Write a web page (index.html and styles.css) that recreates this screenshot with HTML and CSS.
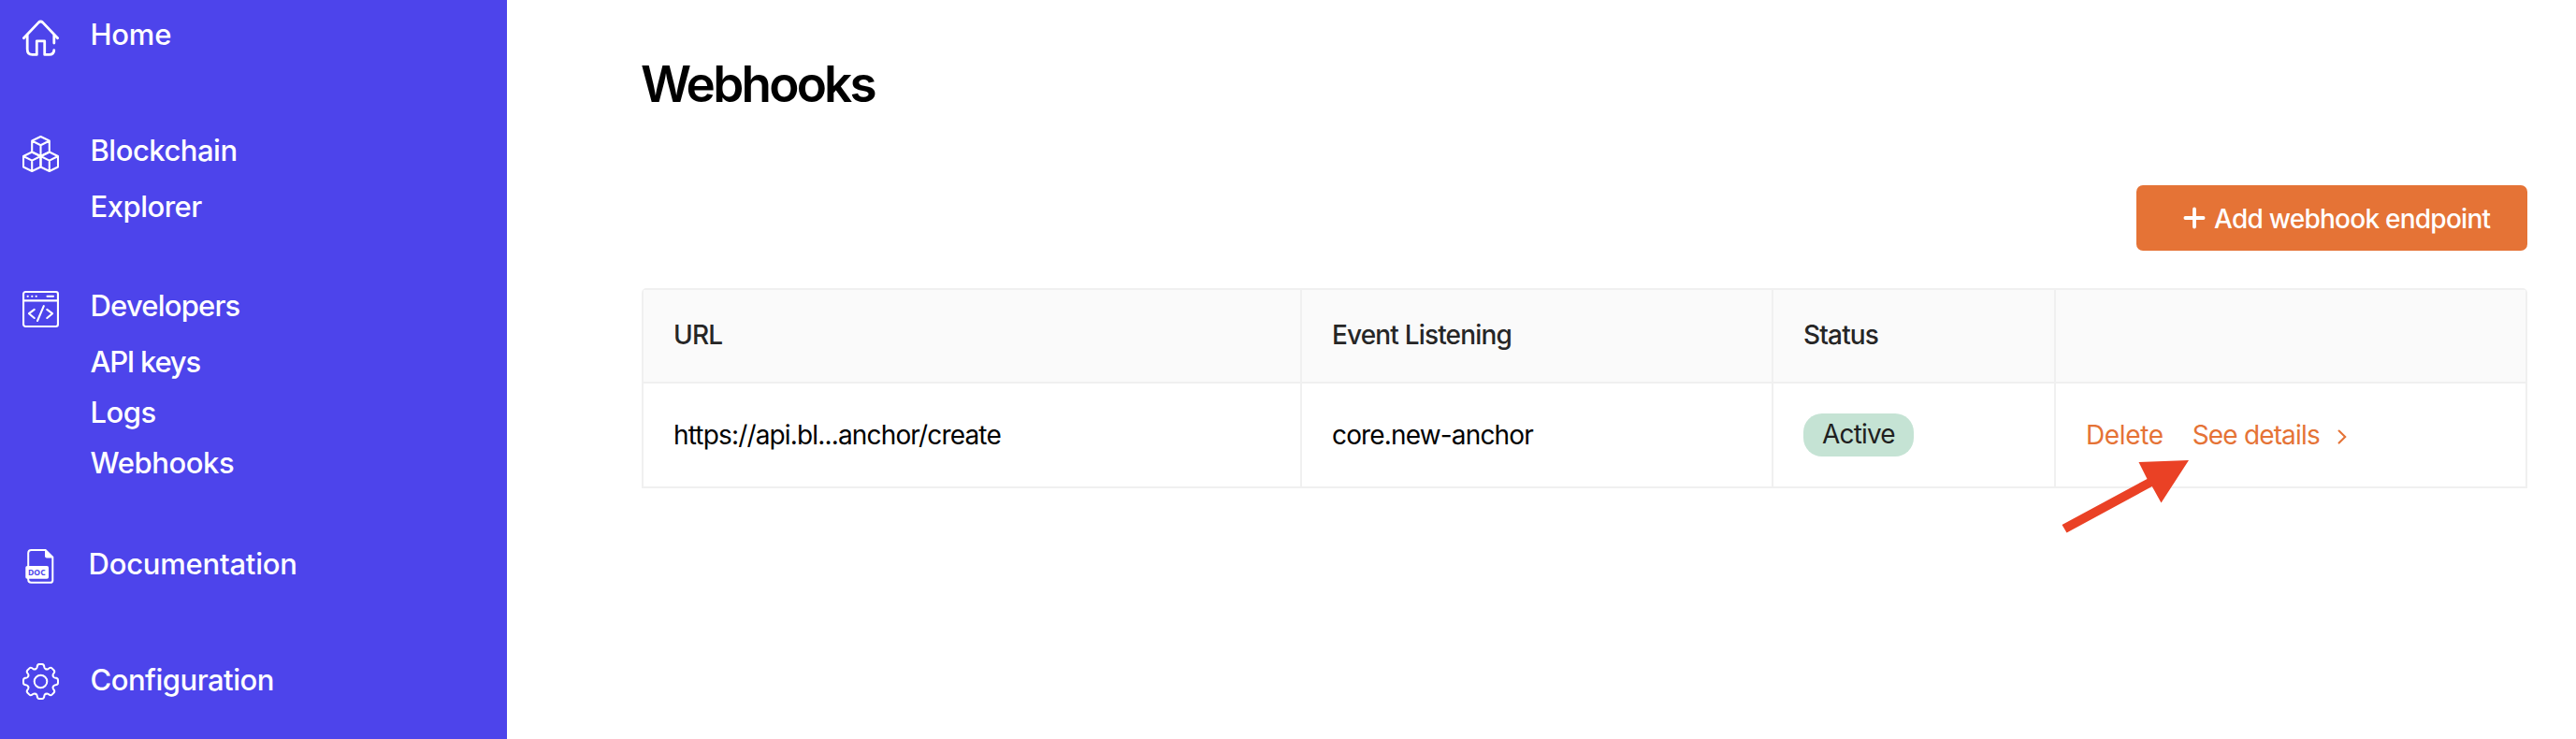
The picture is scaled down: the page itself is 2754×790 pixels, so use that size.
FILE: index.html
```
<!DOCTYPE html>
<html lang="en">
<head>
<meta charset="utf-8">
<title>Webhooks</title>
<link rel="stylesheet" href="styles.css">
</head>
<body>
<div class="app">
  <nav class="sidebar">
    <div class="group">
      <svg class="icon" viewBox="0 0 39 39" fill="none" stroke="#fff" stroke-width="2.8" stroke-linecap="round" stroke-linejoin="round">
        <path d="M1.4 19.7 17.2 3.1Q19.5 1 21.8 3.1L37.6 19.7"/>
        <path d="M5.2 17V31.5Q5.2 37.4 10.5 37.4H15.3V22.8H23.7V37.4H28.5Q33.6 37.4 33.8 32.6"/>
        <path d="M33.8 17V25"/>
      </svg>
      <div class="links"><a>Home</a></div>
    </div>
    <div class="group">
      <svg class="icon" viewBox="0 0 39 39" fill="none" stroke="#fff" stroke-width="2.1" stroke-linejoin="round">
        <path d="M19.5 1 28.8 5.5V17.5L19.5 22 10.2 17.5V5.5ZM10.2 5.5 19.5 10.2 28.8 5.5M19.5 10.2V22"/>
        <path d="M10.2 17.5 19.5 22V33.5L10.2 38 1 33.5V22ZM1 22 10.2 26.6 19.5 22M10.2 26.6V38"/>
        <path d="M28.8 17.5 38 22V33.5L28.8 38 19.5 33.5V22ZM19.5 22 28.8 26.6 38 22M28.8 26.6V38"/>
      </svg>
      <div class="links"><a class="snug">Blockchain</a><a class="first-sub snug">Explorer</a></div>
    </div>
    <div class="group developers">
      <svg class="icon" viewBox="0 0 39 39" fill="none" stroke="#fff" stroke-width="2.1" stroke-linecap="round" stroke-linejoin="round">
        <rect x="1.05" y="1.05" width="36.9" height="36.9" rx="2.2"/>
        <path d="M1 10.4H38M26.5 5.7H33M12.7 19.8 7 24.2 12.7 29M26.3 19.8 32 24.2 26.3 29M22.8 16.2 16 32"/>
        <path d="M5.6 5.7H5.8M10.2 5.7H10.4M14.6 5.7H14.8"/>
      </svg>
      <div class="links"><a class="tight">Developers</a><a class="first-sub tighter">API keys</a><a class="sub snug">Logs</a><a class="sub webhooks">Webhooks</a></div>
    </div>
    <div class="group documentation">
      <svg class="icon icon-doc" viewBox="0 0 39 39" fill="none">
        <path d="M6.2 19V5.3Q6.2 2 9.5 2H24.6L32.3 9.6V34.4Q32.3 36.8 29.6 36.8H9.5Q6.2 36.8 6.2 33.4V31" stroke="#fff" stroke-width="2"/>
        <path d="M24 1.4 33 10.6H26Q24 10.6 24 8.6Z" fill="#fff"/>
        <rect x="3.3" y="19" width="24.7" height="13.7" rx="1.8" fill="#fff"/>
        <text class="doc-text" x="6" y="29.2" textLength="18.6" lengthAdjust="spacingAndGlyphs">DOC</text>
      </svg>
      <div class="links"><a>Documentation</a></div>
    </div>
    <div class="group">
      <svg class="icon icon-gear" viewBox="-19.5 -19.5 39 39" fill="none" stroke="#fff" stroke-width="2" stroke-linecap="round">
        <defs><path id="tooth" d="M-5.5-13.3Q-4-13.9-3.9-15Q-3.7-18.5-1.5-18.5H1.5Q3.7-18.5 3.9-15Q4-13.9 5.5-13.3"/></defs>
        <use href="#tooth"/><use href="#tooth" transform="rotate(45)"/><use href="#tooth" transform="rotate(90)"/><use href="#tooth" transform="rotate(135)"/><use href="#tooth" transform="rotate(180)"/><use href="#tooth" transform="rotate(225)"/><use href="#tooth" transform="rotate(270)"/><use href="#tooth" transform="rotate(315)"/>
        <circle r="6.8"/>
      </svg>
      <div class="links"><a class="snug">Configuration</a></div>
    </div>
  </nav>
  <main class="main">
    <h1 class="title">Webhooks</h1>
    <div class="toolbar">
      <button class="add">
        <svg class="plus" viewBox="0 0 24 24" fill="none" stroke="#fff" stroke-width="3.8" stroke-linecap="round"><path d="M12 2.4V21.6M2.4 12H21.6"/></svg>
        <span class="add-label">Add webhook endpoint</span>
      </button>
    </div>
    <div class="table">
      <div class="row head">
        <div class="cell">URL</div><div class="cell">Event Listening</div><div class="cell">Status</div><div class="cell"></div>
      </div>
      <div class="row body">
        <div class="cell">https://api.bl...anchor/create</div>
        <div class="cell">core.new-anchor</div>
        <div class="cell"><span class="badge">Active</span></div>
        <div class="cell actions">
          <a class="delete">Delete</a><a class="details">See details</a>
          <svg class="chevron" viewBox="0 0 10 16" fill="none" stroke="#e57336" stroke-width="2.1" stroke-linecap="round"><path d="M1.6 1.6 8.2 8 1.6 14.6"/></svg>
        </div>
      </div>
      <svg class="arrow" viewBox="0 0 140 80"><path d="M139 1 85.5 3 94.5 21 3.5 70 8.5 78.5 99.8 29 109.5 46.5Z" fill="#ea4125"/></svg>
    </div>
  </main>
</div>
</body>
</html>
```
FILE: styles.css
```
body {
  margin: 0;
  background: #fff;
  font-family: Inter, "Liberation Sans", sans-serif;
}
.app {
  display: flex;
  height: 790px;
  overflow: hidden;
}
.sidebar {
  box-sizing: border-box;
  flex: none;
  width: 542px;
  padding: 17px 0 0 24px;
  background: #4d44eb;
}
.group {
  display: flex;
  align-items: flex-start;
  gap: 33.5px;
  margin-bottom: 84px;
}
.group:nth-child(2) { margin-bottom: 66px; }
.developers { margin-bottom: 68px; }
.documentation { gap: 31.5px; }
.icon {
  flex: none;
  width: 39px;
  height: 39px;
  margin: 4px 0 -3px;
}
.icon-doc { margin-top: 3px; }
.icon-gear { margin-top: 2px; }
.doc-text {
  font: 700 9.5px "Open Sans", sans-serif;
  fill: #4d44eb;
}
.links {
  display: flex;
  flex-direction: column;
  color: #fff;
  font-size: 31px;
  font-weight: 450;
  line-height: 40px;
  letter-spacing: -0.22px;
}
.first-sub { margin-top: 20px; }
.sub { margin-top: 14px; }
.snug { letter-spacing: -0.5px; }
.tight { letter-spacing: -0.8px; }
.tighter { letter-spacing: -1.25px; }
.webhooks { letter-spacing: -0.4px; }
.main {
  flex: none;
  width: 2016px;
  padding: 60px 0 0 144px;
}
.title {
  margin: 0 0 0 -1px;
  font-size: 53px;
  font-weight: 600;
  line-height: 60px;
  letter-spacing: -2.78px;
}
.toolbar {
  display: flex;
  justify-content: flex-end;
  margin: 78px 0 40px;
}
.add {
  display: flex;
  align-items: center;
  box-sizing: border-box;
  width: 418px;
  height: 70px;
  padding: 0 0 0 50px;
  border: 0;
  border-radius: 7px;
  background: #e57336;
  color: #fff;
  font: 500 28px/40px Inter, sans-serif;
  letter-spacing: -0.75px;
}
.add-label { padding-top: 2px; }
.plus {
  width: 24px;
  height: 24px;
  margin-right: 9px;
}
.table {
  position: relative;
  box-sizing: border-box;
  width: 2016px;
  border: 2px solid #f0f0f0;
  border-radius: 5px 5px 0 0;
  color: #000;
  font-size: 28px;
  letter-spacing: -0.84px;
}
.row {
  display: grid;
  grid-template-columns: 704px 504px 302px 502px;
}
.cell {
  display: flex;
  align-items: center;
  box-sizing: border-box;
  padding-left: 32px;
  border-right: 2px solid #f0f0f0;
}
.cell:last-child { border-right: 0; }
.head {
  height: 98px;
  border-bottom: 2px solid #f0f0f0;
  background: #fafafa;
  color: #262626;
  font-weight: 500;
}
.head .cell { padding-bottom: 2px; }
.body { height: 110px; }
.body .cell { padding-bottom: 1px; }
.badge {
  box-sizing: border-box;
  width: 118px;
  height: 46px;
  padding-left: 20px;
  border-radius: 20px;
  background: #c5e3d4;
  color: #1f1f1f;
  line-height: 45px;
}
.actions { color: #e57336; }
.delete {
  margin-right: 31px;
  letter-spacing: -0.35px;
}
.chevron {
  width: 10px;
  height: 16px;
  margin: 4px 0 0 19px;
}
.arrow {
  position: absolute;
  left: 1512.5px;
  top: 181px;
  width: 140px;
  height: 80px;
}
```
